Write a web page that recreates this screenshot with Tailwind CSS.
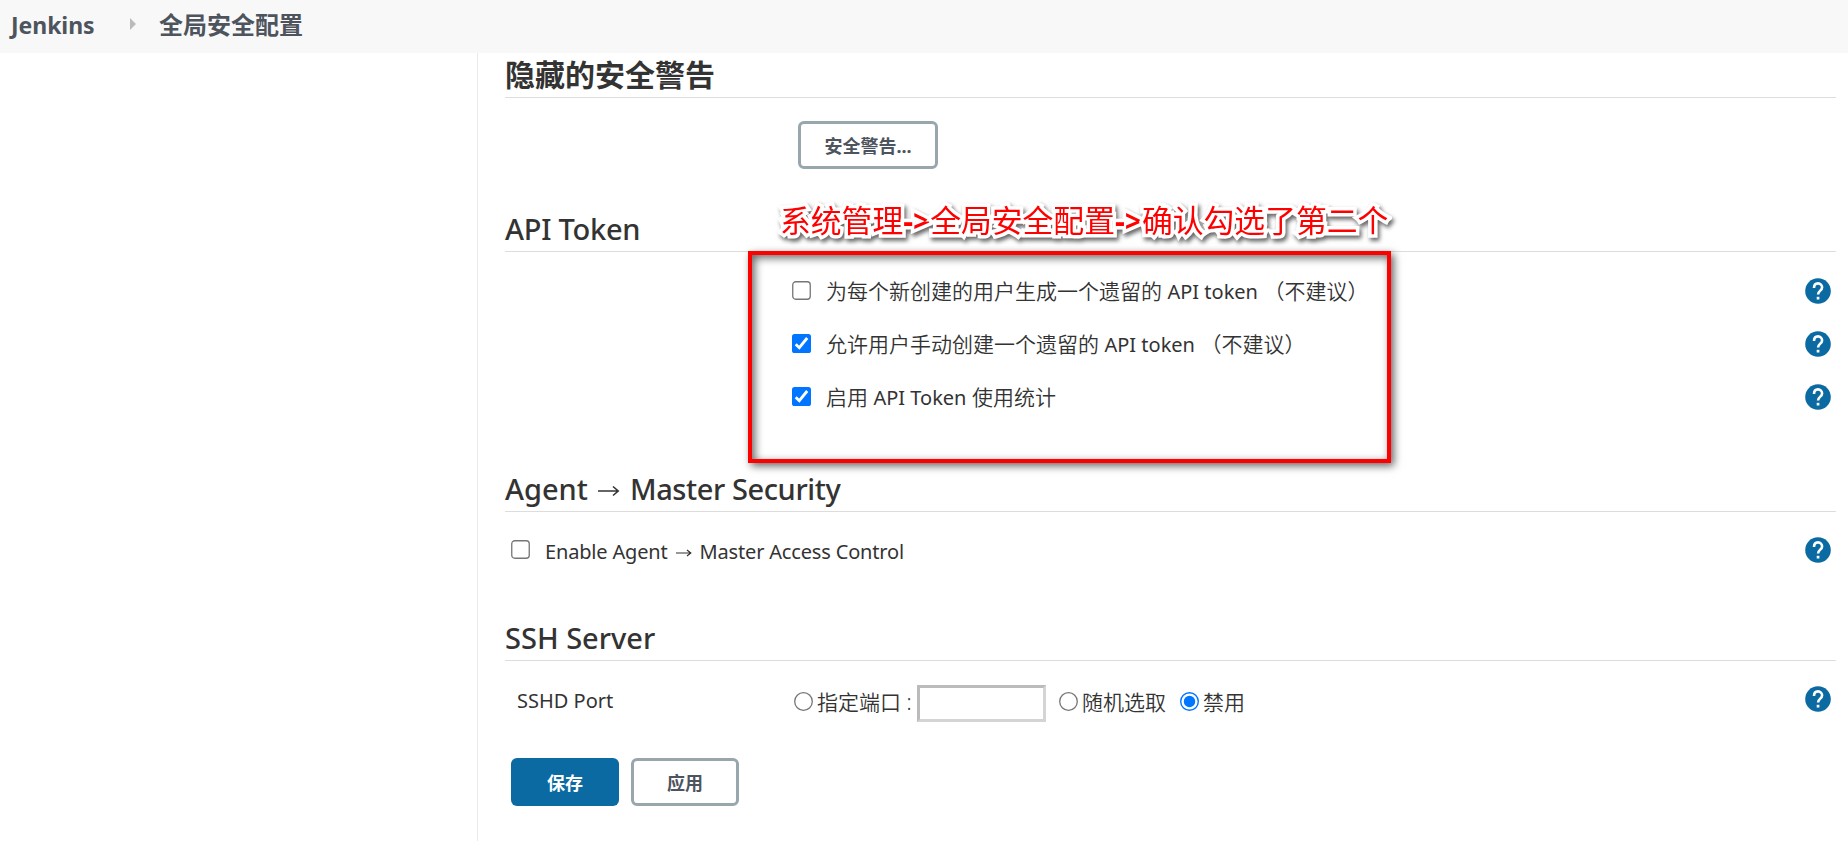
<!DOCTYPE html>
<html lang="zh-CN">
<head>
<meta charset="utf-8">
<title>全局安全配置 [Jenkins]</title>
<script src="https://cdn.jsdelivr.net/npm/@tailwindcss/browser@4"></script>
</head>
<body class="h-[841px] overflow-hidden bg-white font-['Noto_Sans','Noto_Sans_CJK_SC',sans-serif] text-[21px] text-[#333333]">
<svg class="hidden">
  <symbol id="help" viewBox="0 0 26 26">
    <circle cx="13" cy="13" r="12.8" fill="#0b6aa2"/>
    <path d="M9 10.1C9 7.2 10.6 5.4 13 5.4s4.1 1.7 4.1 4.1c0 3.1-4 3.3-4 7" fill="none" stroke="#fff" stroke-width="2.6"/>
    <rect x="11.7" y="18.8" width="2.7" height="2.7" fill="#fff"/>
  </symbol>
  <symbol id="box-off" viewBox="0 0 19 19">
    <rect x=".75" y=".75" width="17.5" height="17.5" rx="3" fill="#fff" stroke="#767676" stroke-width="1.3"/>
  </symbol>
  <symbol id="box-on" viewBox="0 0 19 19">
    <rect width="19" height="19" rx="2.6" fill="#0075ff"/>
    <path d="M3.7 10.2 7.3 13.7 15.2 4" fill="none" stroke="#fff" stroke-width="2.8"/>
  </symbol>
  <symbol id="radio-off" viewBox="0 0 19 19">
    <circle cx="9.5" cy="9.5" r="8.8" fill="#fff" stroke="#767676" stroke-width="1.3"/>
  </symbol>
  <symbol id="radio-on" viewBox="0 0 19 19">
    <circle cx="9.5" cy="9.5" r="8.8" fill="#fff" stroke="#0075ff" stroke-width="1.4"/>
    <circle cx="9.5" cy="9.5" r="5.7" fill="#0075ff"/>
  </symbol>
</svg>

<header class="flex h-[53px] items-center bg-[#f8f8f8] pb-[3px] pl-[11px] text-[24px] font-bold text-[#4d545d]">
  <span class="w-[119px] whitespace-nowrap text-[23px] tracking-[-0.05px]">Jenkins</span>
  <svg class="mb-[3px] h-3 w-[29px]" viewBox="0 0 29 12"><path d="M0 0 6 6 0 12Z" fill="#bbb"/></svg>
  <span class="whitespace-nowrap">全局安全配置</span>
</header>

<div class="flex h-[788px]">
  <aside class="w-[478px] shrink-0 border-r border-[#eaeaea]"></aside>
  <main class="flex w-[1358px] flex-col pl-[27px]">

    <section class="h-[154px]">
      <h2 class="flex h-[45px] items-center border-b border-[#dddddd] pb-[2px] text-[30px] font-bold">隐藏的安全警告</h2>
      <div class="pt-[23px] pl-[293px]">
        <button class="h-12 w-[140px] rounded-[6px] border-[3px] border-[#98a6ad] pt-[2px] text-[18px] font-bold text-[#4d545d]">安全警告...</button>
      </div>
    </section>

    <section class="relative h-[260px]">
      <h2 class="flex h-[45px] items-center border-b border-[#dddddd] text-[29px] font-medium tracking-[-0.25px]">API Token</h2>
      <div class="flex flex-col pt-[12px] font-[350]">
        <div class="flex h-[53px] items-center pr-[5px] pl-[287px]">
          <svg class="mr-[15px] size-[19px]"><use href="#box-off"/></svg>
          <span class="whitespace-nowrap pt-[3px]">为每个新创建的用户生成一个遗留的 <span class="text-[20px] font-normal">API token</span> （不建议）</span>
          <svg class="ml-auto size-[26px]"><use href="#help"/></svg>
        </div>
        <div class="flex h-[53px] items-center pr-[5px] pl-[287px]">
          <svg class="mr-[15px] size-[19px]"><use href="#box-on"/></svg>
          <span class="whitespace-nowrap pt-[3px]">允许用户手动创建一个遗留的 <span class="text-[20px] font-normal">API token</span> （不建议）</span>
          <svg class="ml-auto size-[26px]"><use href="#help"/></svg>
        </div>
        <div class="flex h-[53px] items-center pr-[5px] pl-[287px]">
          <svg class="mr-[15px] size-[19px]"><use href="#box-on"/></svg>
          <span class="whitespace-nowrap pt-[3px]">启用 <span class="text-[20px] font-normal">API Token</span> 使用统计</span>
          <svg class="ml-auto size-[26px]"><use href="#help"/></svg>
        </div>
      </div>
      <!-- annotation over the form -->
      <div class="absolute top-[44px] left-[243px] h-[212px] w-[643px] border-4 border-[#ff0000] shadow-[3px_3px_8px_rgba(0,0,0,0.6),inset_3px_3px_8px_rgba(0,0,0,0.6)]"></div>
      <div class="absolute top-[-10px] left-[275px] flex h-[46px] items-center whitespace-nowrap text-[30.8px] text-[#ff0000] [-webkit-text-stroke:7px_white] [paint-order:stroke_fill] [filter:drop-shadow(2px_3px_2px_rgba(0,0,0,0.6))]"><span>系统管理</span><b class="w-[27px]">-&gt;</b><span>全局安全配置</span><b class="w-[27px]">-&gt;</b><span>确认勾选了第二个</span></div>
    </section>

    <section class="h-[149px]">
      <h2 class="flex h-[45px] items-center border-b border-[#dddddd] text-[29px] font-medium"><span>Agent</span><svg class="mx-[10px] mt-[3px] h-3 w-[22px]" viewBox="0 0 22 12"><path d="M0 6H20M15 1.5 20.2 6 15 10.5" fill="none" stroke="#333" stroke-width="1.6"/></svg><span class="tracking-[-0.4px]">Master Security</span></h2>
      <div class="flex h-[75px] items-center pr-[5px] pl-[6px]">
        <svg class="mr-[15px] size-[19px]"><use href="#box-off"/></svg>
        <span class="flex items-center pt-[4px] text-[20px] tracking-[-0.17px] whitespace-nowrap"><span>Enable Agent</span><svg class="mx-2 mt-[3px] h-2 w-4" viewBox="0 0 16 8"><path d="M0 4H15M11 1 14.8 4 11 7" fill="none" stroke="#333" stroke-width="1.2"/></svg><span>Master Access Control</span></span>
        <svg class="ml-auto size-[26px]"><use href="#help"/></svg>
      </div>
    </section>

    <section class="h-[142px]">
      <h2 class="flex h-[45px] items-center border-b border-[#dddddd] text-[29px] font-medium">SSH Server</h2>
      <div class="flex h-[76px] items-center pr-[5px] pl-[12px] font-[350]">
        <span class="w-[277px] pt-[4px] text-[20px] font-normal">SSHD Port</span>
        <svg class="mt-[4px] mr-[4px] size-[19px]"><use href="#radio-off"/></svg>
        <span class="w-[100px] pt-[8px] whitespace-nowrap">指定端口 :</span>
        <input type="text" class="mt-[8px] mr-[13px] h-[37px] w-[129px] border-[3px] border-t-[#bbbbbb] border-r-[#d4d4d4] border-b-[#d4d4d4] border-l-[#bbbbbb]">
        <svg class="mt-[4px] mr-[4px] size-[19px]"><use href="#radio-off"/></svg>
        <span class="w-[98px] pt-[8px]">随机选取</span>
        <svg class="mt-[4px] mr-[4px] size-[19px]"><use href="#radio-on"/></svg>
        <span class="pt-[8px]">禁用</span>
        <svg class="ml-auto size-[26px]"><use href="#help"/></svg>
      </div>
    </section>

    <div class="flex gap-3 pl-[6px] text-[18px] font-bold">
      <button class="h-12 w-[108px] rounded-[6px] bg-[#0b6aa2] pt-[2px] text-white">保存</button>
      <button class="h-12 w-[108px] rounded-[6px] border-[3px] border-[#98a6ad] pt-[2px] text-[#4d545d]">应用</button>
    </div>
  </main>
</div>
</body>
</html>
